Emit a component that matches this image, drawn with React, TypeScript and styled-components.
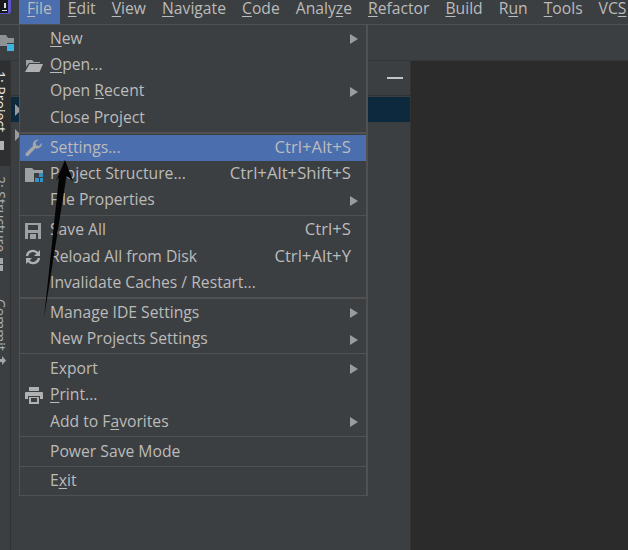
import React from 'react';
import styled, { createGlobalStyle } from 'styled-components';

const GlobalStyle = createGlobalStyle`
  html, body {
    margin: 0;
    padding: 0;
    background: #3c3f41;
  }
`;

const Window = styled.div`
  position: relative;
  width: 628px;
  height: 550px;
  overflow: hidden;
  display: flex;
  flex-direction: column;
  background: #3c3f41;
  color: #bbbbbb;
  font-family: 'Open Sans', 'Noto Sans', sans-serif;
  font-size: 15.7px;
`;

const MenuBar = styled.div`
  display: flex;
  flex: none;
  height: 24px;
  padding-left: 19px;
  white-space: nowrap;
  border-bottom: 1px solid #515151;
`;

const Logo = styled.svg`
  position: absolute;
  left: 0;
  top: 0;
`;

const MenuTitle = styled.div<{ $active?: boolean }>`
  flex: none;
  height: 24px;
  line-height: 16px;
  padding: 0 8px;
  background: ${({ $active }) => ($active ? '#4b6eaf' : 'transparent')};
`;

const Key = styled.span`
  text-decoration: underline;
  text-underline-offset: 2px;
`;

const Toolbar = styled.div`
  flex: none;
  height: 35px;
  display: flex;
  align-items: center;
  border-bottom: 1px solid #343638;
`;

const Body = styled.div`
  flex: 1;
  display: flex;
  min-height: 0;
`;

const Stripe = styled.div`
  flex: none;
  width: 10px;
  border-right: 1px solid #323232;
  display: flex;
  flex-direction: column;
  overflow: hidden;
`;

const StripeTab = styled.div<{ $active?: boolean; $height: number }>`
  flex: none;
  height: ${({ $height }) => $height}px;
  background: ${({ $active }) => ($active ? '#2d2f30' : 'transparent')};
  display: flex;
  flex-direction: column;
  padding-top: 10px;
  box-sizing: border-box;
`;

const StripeLabel = styled.span<{ $active?: boolean }>`
  align-self: flex-end;
  writing-mode: vertical-rl;
  font-size: 14px;
  line-height: 16px;
  margin-right: 2px;
  white-space: nowrap;
  color: ${({ $active }) => ($active ? '#e8e8e8' : '#a9b0b5')};
`;

const StripeIcon = styled.svg<{ $bottom: number }>`
  flex: none;
  margin-top: auto;
  margin-bottom: ${({ $bottom }) => $bottom}px;
`;

const ProjectPanel = styled.div`
  flex: none;
  width: 399px;
  display: flex;
  flex-direction: column;
  border-right: 1px solid #323232;
`;

const PanelHeader = styled.div`
  flex: none;
  height: 35px;
  display: flex;
  align-items: center;
  justify-content: flex-end;
  padding-right: 7px;
  border-bottom: 1px solid #323232;
  box-sizing: border-box;
`;

const MinimizeDash = styled.div`
  width: 16px;
  height: 2px;
  background: #c4c4c4;
`;

const TreeRow = styled.div<{ $selected?: boolean }>`
  flex: none;
  height: 25px;
  margin-top: ${({ $selected }) => ($selected ? '1px' : '0')};
  display: flex;
  align-items: center;
  padding-left: 4px;
  background: ${({ $selected }) => ($selected ? '#0d293e' : 'transparent')};
`;

const TreeArrow = styled.div`
  width: 0;
  height: 0;
  border-left: 6px solid #9a9c9e;
  border-top: 6px solid transparent;
  border-bottom: 6px solid transparent;
`;

const Editor = styled.div`
  flex: 1;
  background: #2b2b2b;
`;

const Menu = styled.div`
  position: absolute;
  left: 19px;
  top: 24px;
  width: 346px;
  padding-top: 1px;
  background: #3c3f41;
  border: 1px solid #515151;
  border-right-width: 2px;
  display: flex;
  flex-direction: column;
`;

const Row = styled.div<{ $active?: boolean }>`
  flex: none;
  height: 26.4px;
  display: flex;
  align-items: center;
  white-space: nowrap;
  line-height: 20px;
  background: ${({ $active }) => ($active ? '#4b6eaf' : 'transparent')};
`;

const IconSlot = styled.div`
  flex: none;
  width: 30px;
  height: 20px;
  padding-left: 5px;
  box-sizing: border-box;
  display: flex;
  align-items: center;
`;

const Label = styled.span`
  flex: 1;
  margin-top: -3px;
`;

const Shortcut = styled.span`
  flex: none;
  margin-right: 15px;
  margin-top: -3px;
  font-size: 16.7px;
`;

const Submenu = styled.div`
  flex: none;
  margin-right: 8px;
  width: 0;
  height: 0;
  border-left: 8px solid #9a9c9e;
  border-top: 5px solid transparent;
  border-bottom: 5px solid transparent;
`;

const Separator = styled.div<{ $thick?: boolean }>`
  flex: none;
  height: 3.4px;
  &::before {
    content: '';
    display: block;
    height: ${({ $thick }) => ($thick ? 2 : 1)}px;
    margin-top: 0.4px;
    background: #515151;
  }
`;

const PointerArrow = styled.svg`
  position: absolute;
  left: 0;
  top: 0;
  pointer-events: none;
`;

const OpenIcon = () => (
  <svg width="18" height="14" viewBox="0 0 18 14">
    <path d="M1 1h6l2 2h6v1H4L1 8z" fill="#9ea1a4" />
    <path d="M4.500 5H18l-3.500 8H0z" fill="#afb1b3" />
  </svg>
);

const WrenchIcon = () => (
  <svg width="18" height="18" viewBox="0 0 18 18">
    <path
      d="M17 4.500a5 5 0 0 1-6.600 4.800L3.600 16.600a1.900 1.900 0 0 1-2.700-2.700l7.100-7A5 5 0 0 1 13.500.6L10.600 3.500l.5 2.800 2.800.6 2.800-3z"
      fill="#a4a6a8"
    />
  </svg>
);

const SaveIcon = () => (
  <svg width="16" height="16" viewBox="0 0 16 16">
    <path d="M0 0h16v16H0z" fill="#9ea1a4" />
    <rect x="3" y="2" width="10" height="5" fill="#3c3f41" />
    <rect x="3" y="10" width="10" height="6" fill="#3c3f41" />
    <rect x="5" y="11" width="6" height="5" fill="#9ea1a4" />
  </svg>
);

const ReloadIcon = () => (
  <svg width="16" height="16" viewBox="0 0 16 16" fill="none">
    <path d="M2 7a6 6 0 0 1 10.500-3" stroke="#afb1b3" strokeWidth="2.400" />
    <path d="M14 9a6 6 0 0 1-10.500 3" stroke="#afb1b3" strokeWidth="2.400" />
    <path d="M15 1v6H9z" fill="#afb1b3" />
    <path d="M1 15V9h6z" fill="#afb1b3" />
  </svg>
);

const PrintIcon = () => (
  <svg width="18" height="17" viewBox="0 0 18 17">
    <rect x="4" y="0" width="10" height="4" fill="#afb1b3" />
    <path d="M1 5h16a1 1 0 0 1 1 1v6h-3V9H3v3H0V6a1 1 0 0 1 1-1z" fill="#afb1b3" />
    <path d="M4 10h10v7H4z" fill="#afb1b3" />
    <rect x="6" y="11" width="6" height="4" fill="#3c3f41" />
  </svg>
);

const StructureIcon = () => (
  <svg width="18" height="14" viewBox="0 0 18 14">
    <path d="M0 0h7l2 2h9v12H0z" fill="#9ea1a4" />
    <rect x="9" y="5" width="9" height="9" fill="#3c3f41" />
    <rect x="14" y="5" width="4" height="4" fill="#3592c4" />
    <rect x="10" y="10" width="4" height="4" fill="#3592c4" />
    <rect x="15" y="10" width="3" height="4" fill="#3592c4" />
  </svg>
);

const menuTitles: [string, string, string][] = [
  ['', 'F', 'ile'],
  ['', 'E', 'dit'],
  ['', 'V', 'iew'],
  ['', 'N', 'avigate'],
  ['', 'C', 'ode'],
  ['Analy', 'z', 'e'],
  ['', 'R', 'efactor'],
  ['', 'B', 'uild'],
  ['R', 'u', 'n'],
  ['', 'T', 'ools'],
  ['VC', 'S', ''],
];

const App = () => {
  return (
    <Window>
      <GlobalStyle />
      <MenuBar>
        {menuTitles.map(([before, key, after], i) => (
          <MenuTitle key={key + after} $active={i === 0}>
            {before}
            <Key>{key}</Key>
            {after}
          </MenuTitle>
        ))}
      </MenuBar>
      <Logo width="12" height="15" viewBox="0 0 12 15">
        <rect width="8" height="13" fill="#16181c" />
        <path d="M8 0h3v11q0 3-3 3H0v-1h8z" fill="#5a54c8" />
        <rect x="2" y="10" width="5" height="1" fill="#dddddd" />
        <rect x="4" y="3" width="2" height="5" fill="#dddddd" />
      </Logo>
      <Toolbar>
        <svg width="15" height="18" viewBox="0 0 15 18" style={{ flex: 'none' }}>
          <path d="M0 1h6l2 3h6v8H0z" fill="#8f9295" />
          <rect x="7" y="9" width="8" height="9" fill="#3c3f41" />
          <rect x="7" y="10" width="7" height="7" fill="#3db4e6" />
        </svg>
      </Toolbar>
      <Body>
        <Stripe>
          <StripeTab $active $height={105}>
            <StripeLabel $active>1: Project</StripeLabel>
            <StripeIcon $bottom={16} width="5" height="9" viewBox="0 0 5 9">
              <rect width="4" height="9" fill="#b0b2b4" />
            </StripeIcon>
          </StripeTab>
          <StripeTab $height={123}>
            <StripeLabel>2: Structure</StripeLabel>
            <StripeIcon $bottom={18} width="5" height="13" viewBox="0 0 5 13">
              <rect width="3" height="6" fill="#a4a6a8" />
              <rect y="7" width="3" height="6" fill="#a4a6a8" />
            </StripeIcon>
          </StripeTab>
          <StripeTab $height={82}>
            <StripeLabel>Commit</StripeLabel>
            <StripeIcon $bottom={6} width="7" height="9" viewBox="0 0 7 9">
              <path d="M0 3h2V0l4 4.500L2 9V6H0z" fill="#a4a6a8" />
            </StripeIcon>
          </StripeTab>
        </Stripe>
        <ProjectPanel>
          <PanelHeader>
            <MinimizeDash />
          </PanelHeader>
          <TreeRow $selected>
            <TreeArrow />
          </TreeRow>
          <TreeRow>
            <TreeArrow />
          </TreeRow>
        </ProjectPanel>
        <Editor />
      </Body>
      <Menu>
        <Row>
          <IconSlot />
          <Label>
            <Key>N</Key>ew
          </Label>
          <Submenu />
        </Row>
        <Row>
          <IconSlot>
            <OpenIcon />
          </IconSlot>
          <Label>
            <Key>O</Key>pen...
          </Label>
        </Row>
        <Row>
          <IconSlot />
          <Label>
            Open <Key>R</Key>ecent
          </Label>
          <Submenu />
        </Row>
        <Row>
          <IconSlot />
          <Label>Close Project</Label>
        </Row>
        <Separator $thick />
        <Row $active>
          <IconSlot>
            <WrenchIcon />
          </IconSlot>
          <Label>
            Se<Key>t</Key>tings...
          </Label>
          <Shortcut>Ctrl+Alt+S</Shortcut>
        </Row>
        <Row>
          <IconSlot>
            <StructureIcon />
          </IconSlot>
          <Label>Project Structure...</Label>
          <Shortcut>Ctrl+Alt+Shift+S</Shortcut>
        </Row>
        <Row>
          <IconSlot />
          <Label>File Properties</Label>
          <Submenu />
        </Row>
        <Separator />
        <Row>
          <IconSlot>
            <SaveIcon />
          </IconSlot>
          <Label>Save All</Label>
          <Shortcut>Ctrl+S</Shortcut>
        </Row>
        <Row>
          <IconSlot>
            <ReloadIcon />
          </IconSlot>
          <Label>Reload All from Disk</Label>
          <Shortcut>Ctrl+Alt+Y</Shortcut>
        </Row>
        <Row>
          <IconSlot />
          <Label>Invalidate Caches / Restart...</Label>
        </Row>
        <Separator $thick />
        <Row>
          <IconSlot />
          <Label>Manage IDE Settings</Label>
          <Submenu />
        </Row>
        <Row>
          <IconSlot />
          <Label>New Projects Settings</Label>
          <Submenu />
        </Row>
        <Separator />
        <Row>
          <IconSlot />
          <Label>Export</Label>
          <Submenu />
        </Row>
        <Row>
          <IconSlot>
            <PrintIcon />
          </IconSlot>
          <Label>
            <Key>P</Key>rint...
          </Label>
        </Row>
        <Row>
          <IconSlot />
          <Label>
            Add to F<Key>a</Key>vorites
          </Label>
          <Submenu />
        </Row>
        <Separator />
        <Row>
          <IconSlot />
          <Label>Power Save Mode</Label>
        </Row>
        <Separator />
        <Row>
          <IconSlot />
          <Label>
            E<Key>x</Key>it
          </Label>
        </Row>
      </Menu>
      <PointerArrow width="628" height="550" viewBox="0 0 628 550">
        <path d="M65 160L73 181L66.500 176L44 318L59 177L56 181z" fill="#050505" />
      </PointerArrow>
    </Window>
  );
};

export default App;
